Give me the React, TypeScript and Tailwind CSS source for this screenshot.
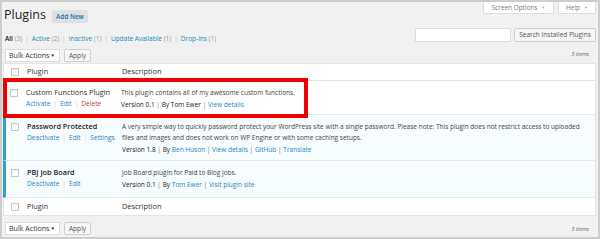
import React from "react";

const font = { fontFamily: '"Open Sans", "Noto Sans", sans-serif' };

function Checkbox() {
    return <div className="w-[8px] h-[8px] bg-white border border-[#c8c8c8] shadow-[inset_0_1px_1px_rgba(0,0,0,0.08)]" />;
}

function Sep() {
    return <span className="text-[#c8c8c8] mx-[3px]">|</span>;
}

function Tablenav({ top }: { top?: boolean }) {
    return (
        <div className={`flex items-start justify-between h-[13px] ${top ? "mt-[7px]" : "mt-[6px]"} pl-[3px] pr-[9px]`}>
            <div className="flex gap-[4px]">
                <div className="w-[55px] h-[13px] bg-white border border-[#dcdcdc] flex items-center justify-between pl-[3px] pr-[4px] text-[7.1px] text-[#333]">
                    <span>Bulk Actions</span>
                    <span className="text-[4.5px] text-[#222]">▼</span>
                </div>
                <div className="w-[27px] h-[13px] bg-[#f7f7f7] border border-[#cfcfcf] rounded-[2px] flex items-center justify-center text-[6.6px] text-[#555]">
                    Apply
                </div>
            </div>
            <span className={`italic text-[5.6px] text-[#666] ${top ? "mt-[1px]" : "mt-[3px]"}`}>3 items</span>
        </div>
    );
}

interface Row {
    name: string;
    active: boolean;
    actions: { label: string; red?: boolean }[];
    desc: React.ReactNode;
    version: string;
    by: string;
    byLink: boolean;
    links: string[];
    height: string;
}

const rows: Row[] = [
    {
        name: "Custom Functions Plugin",
        active: false,
        actions: [{ label: "Activate" }, { label: "Edit" }, { label: "Delete", red: true }],
        desc: "This plugin contains all of my awesome custom functions.",
        version: "Version 0.1",
        by: "Tom Ewer",
        byLink: false,
        links: ["View details"],
        height: "h-[34px]",
    },
    {
        name: "Password Protected",
        active: true,
        actions: [{ label: "Deactivate" }, { label: "Edit" }, { label: "Settings" }],
        desc: (
            <>
                A very simple way to quickly password protect your WordPress site with a single password. Please note: This plugin does not restrict access to uploaded
                <br />
                files and images and does not work on WP Engine or with some caching setups.
            </>
        ),
        version: "Version 1.8",
        by: "Ben Huson",
        byLink: true,
        links: ["View details", "GitHub", "Translate"],
        height: "h-[46px]",
    },
    {
        name: "PBJ Job Board",
        active: true,
        actions: [{ label: "Deactivate" }, { label: "Edit" }],
        desc: "Job Board plugin for Paid to Blog Jobs.",
        version: "Version 0.1",
        by: "Tom Ewer",
        byLink: true,
        links: ["Visit plugin site"],
        height: "h-[37px]",
    },
];

function PluginRow({ row }: { row: Row }) {
    return (
        <div
            className={`grid ${row.height} border-b border-[#e6eaec] ${
                row.active
                    ? "grid-cols-[21px_95px_1fr] border-l-[3px] border-l-[#2ea2cc] bg-[#f7fcfe]"
                    : "grid-cols-[23px_95px_1fr] bg-white"
            } pt-[6px]`}
        >
            <div className={`${row.active ? "pl-[5px]" : "pl-[7px]"} pt-[2px]`}>
                <Checkbox />
            </div>
            <div className="leading-[11px]">
                <div className={`text-[7.3px] ${row.active ? "font-semibold text-[#222]" : "text-[#333]"}`}>{row.name}</div>
                <div className="text-[6.6px] text-[#1e87bd]">
                    {row.actions.map((a, i) => (
                        <span key={a.label}>
                            {i > 0 && <span className="text-[#ccc] mx-[3px]">|</span>}
                            <span className={a.red ? "text-[#c03a3a]" : ""}>{a.label}</span>
                        </span>
                    ))}
                </div>
            </div>
            <div className="text-[6.5px] text-[#444] leading-[11px] whitespace-nowrap">
                <div>{row.desc}</div>
                <div className="mt-[1px] text-[#222]">
                    {row.version} <span className="text-[#777]">|</span> By{" "}
                    <span className={row.byLink ? "text-[#1e87bd]" : ""}>{row.by}</span>
                    {row.links.map((l) => (
                        <span key={l}>
                            {" "}
                            <span className="text-[#777]">|</span> <span className="text-[#1e87bd]">{l}</span>
                        </span>
                    ))}
                </div>
            </div>
        </div>
    );
}

function HeadRow({ footer }: { footer?: boolean }) {
    return (
        <div className={`grid grid-cols-[23px_95px_1fr] h-[17px] items-center bg-white border-l border-[#e5e5e5] ${footer ? "" : "border-b border-b-[#e1e1e1]"}`}>
            <div className="pl-[7px]">
                <Checkbox />
            </div>
            <div className="text-[7.4px] text-[#333]">Plugin</div>
            <div className="text-[7.4px] text-[#333]">Description</div>
        </div>
    );
}

export default function App() {
    return (
        <div className="w-[600px] h-[239px] border-2 border-[#cdcdcd] bg-[#f1f1f1] relative overflow-hidden" style={font}>
            {/* header */}
            <div className="flex justify-between h-[26px]">
                <div className="flex items-start pl-[2px] pt-[5px]">
                    <h1 className="text-[12.5px] leading-[16px] text-[#222]">Plugins</h1>
                    <div className="ml-[6px] mt-[3px] w-[36px] h-[13px] bg-[#e0e0e0] rounded-[2px] flex items-center justify-center text-[6.4px] font-semibold text-[#0f77ab]">
                        Add New
                    </div>
                </div>
                <div className="flex gap-[4px] pr-[2px]">
                    <div className="w-[71px] h-[12px] bg-white border border-t-0 border-[#dedede] rounded-b-[2px] flex items-center justify-center gap-[4px] text-[6.4px] text-[#777]">
                        Screen Options <span className="text-[4px] text-[#aaa]">▼</span>
                    </div>
                    <div className="w-[38px] h-[12px] bg-white border border-t-0 border-[#dedede] rounded-b-[2px] flex items-center justify-center gap-[4px] text-[6.4px] text-[#777]">
                        Help <span className="text-[4px] text-[#aaa]">▼</span>
                    </div>
                </div>
            </div>

            {/* filters + search */}
            <div className="flex justify-between items-start h-[14px]">
                <div className="mt-[6px] pl-[3px] text-[6.5px] leading-[10px] text-[#1e87bd]">
                    <span className="font-semibold text-[#111]">All</span> <span className="text-[#999]">(3)</span>
                    <Sep />
                    Active <span className="text-[#999]">(2)</span>
                    <Sep />
                    Inactive <span className="text-[#999]">(1)</span>
                    <Sep />
                    Update Available <span className="text-[#999]">(1)</span>
                    <Sep />
                    Drop-ins <span className="text-[#999]">(1)</span>
                </div>
                <div className="flex gap-[3px] pr-[2px]">
                    <div className="w-[96px] h-[14px] bg-white border border-[#dddddd]" />
                    <div className="w-[82px] h-[14px] bg-[#f7f7f7] border border-[#cfcfcf] rounded-[2px] flex items-center justify-center text-[6.5px] text-[#555]">
                        Search Installed Plugins
                    </div>
                </div>
            </div>

            <Tablenav top />

            {/* table */}
            <div className="mt-[1px] ml-[1px] mr-[2px] border-t border-r border-b border-[#e5e5e5] bg-white">
                <HeadRow />
                {rows.map((r) => (
                    <PluginRow key={r.name} row={r} />
                ))}
                <HeadRow footer />
            </div>

            <Tablenav />

            {/* highlight */}
            <div className="absolute left-[1px] top-[76px] w-[305px] h-[40px] border-[4px] border-[#f00000]" />
        </div>
    );
}
